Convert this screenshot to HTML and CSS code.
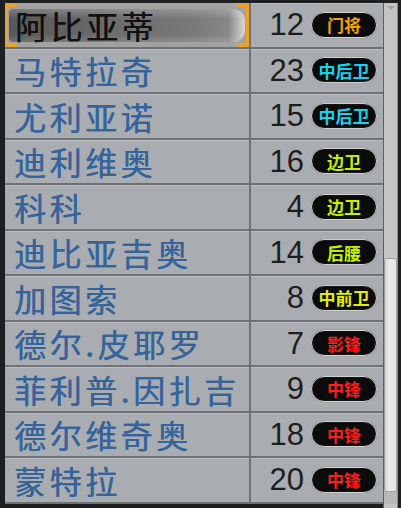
FILE: index.html
```html
<!DOCTYPE html>
<html lang="zh-CN">

<head>
    <meta charset="UTF-8">
    <meta name="viewport" content="width=device-width, initial-scale=1.0">
    <title>球员名单</title>
    <link rel="stylesheet" href="styles.css">
</head>

<body>
    <div class="panel">
        <div class="list">
            <div class="row selected">
                <div class="name"><span class="hl">阿比亚蒂</span></div>
                <div class="info"><span class="num">12</span><span class="pos gk">门将</span></div>
            </div>
            <div class="row">
                <div class="name">马特拉奇</div>
                <div class="info"><span class="num">23</span><span class="pos cb">中后卫</span></div>
            </div>
            <div class="row">
                <div class="name">尤利亚诺</div>
                <div class="info"><span class="num">15</span><span class="pos cb">中后卫</span></div>
            </div>
            <div class="row">
                <div class="name">迪利维奥</div>
                <div class="info"><span class="num">16</span><span class="pos wb">边卫</span></div>
            </div>
            <div class="row">
                <div class="name">科科</div>
                <div class="info"><span class="num">4</span><span class="pos wb">边卫</span></div>
            </div>
            <div class="row">
                <div class="name">迪比亚吉奥</div>
                <div class="info"><span class="num">14</span><span class="pos wb">后腰</span></div>
            </div>
            <div class="row">
                <div class="name">加图索</div>
                <div class="info"><span class="num">8</span><span class="pos cm">中前卫</span></div>
            </div>
            <div class="row">
                <div class="name">德尔.皮耶罗</div>
                <div class="info"><span class="num">7</span><span class="pos fw">影锋</span></div>
            </div>
            <div class="row">
                <div class="name">菲利普.因扎吉</div>
                <div class="info"><span class="num">9</span><span class="pos fw">中锋</span></div>
            </div>
            <div class="row">
                <div class="name">德尔维奇奥</div>
                <div class="info"><span class="num">18</span><span class="pos fw">中锋</span></div>
            </div>
            <div class="row">
                <div class="name">蒙特拉</div>
                <div class="info"><span class="num">20</span><span class="pos fw">中锋</span></div>
            </div>
        </div>
        <div class="scrollbar">
            <div class="arrow"></div>
            <div class="track"></div>
            <div class="thumb"></div>
            <div class="grip"></div>
        </div>
    </div>
</body>

</html>
```

FILE: styles.css
```css
*{
    box-sizing: border-box;
}
body{
    margin:0;
    background:#1e1f21;
}
.panel{
    width:401px;
    height:508px;
    padding:3px 3px 0 5px;
    display:flex;
    background:#1e1f21;
}
.list{
    width:379px;
    border-right:1px solid #5c6065;
}
.row{
    display:flex;
    height:45.5px;
    border-bottom:2px solid #6d7176;
    background:#a9adb1;
    box-shadow:inset 0 1px 0 #bcc0c4;
}
.name{
    width:246px;
    border-right:2px solid #6d7176;
    display:flex;
    align-items:center;
    padding-left:9px;
    font-family:"Noto Sans CJK SC", sans-serif;
    font-size:32px;
    line-height:1;
    letter-spacing:3.5px;
    color:#36649a;
    text-shadow:0.6px 0 0 #36649a;
    position:relative;
    white-space:nowrap;
}
.info{
    flex:1;
    display:flex;
    align-items:center;
    justify-content:flex-end;
    gap:7px;
    padding-right:6px;
}
.num{
    font-family:"Liberation Sans", sans-serif;
    font-size:31px;
    line-height:1;
    color:#1e1e1e;
}
.pos{
    width:66px;
    height:26px;
    border-radius:13px;
    background:#0b0b0b;
    border:1px solid #cfd1d3;
    box-shadow:0 0 1px #7a7a7a, inset 0 0 2px #333;
    display:flex;
    align-items:center;
    justify-content:center;
    font-family:"Noto Sans CJK SC", sans-serif;
    font-weight:bold;
    font-size:17px;
    line-height:1;
}
.gk{ color:#f4a400; }
.cb{ color:#12d4f4; }
.wb{ color:#c6ee00; }
.cm{ color:#e6ee00; }
.fw{ color:#ff1c1c; }

/* selected row */
.selected .name{
    padding-left:0;
    background:#a2a2a2;
    color:#111;
    text-shadow:0.6px 0 0 #111;
}
.selected .hl{
    flex:1;
    align-self:stretch;
    margin:6px 4px 5px 4px;
    padding-left:6px;
    display:flex;
    align-items:center;
    border-radius:4px 12px 12px 4px;
    background:
        linear-gradient(to bottom, rgba(255,255,255,.22), rgba(255,255,255,0) 30%, rgba(255,255,255,0) 75%, rgba(255,255,255,.14)),
        linear-gradient(90deg, #585858, #6a6a6a 40%, #7a7a7a 80%, #888 93%, #d8d8d8);
}
.selected .name::before,
.selected .name::after{
    content:"";
    position:absolute;
    top:0;
    bottom:0;
    width:9px;
    border:4px solid #eea224;
    border-left-width:3px;
    border-right-width:0;
}
.selected .name::before{
    left:0;
}
.selected .name::after{
    right:0;
    border-left-width:0;
    border-right-width:3px;
}

/* scrollbar */
.scrollbar{
    width:14px;
    display:flex;
    flex-direction:column;
    background:#c2c4c6;
    border-right:1px solid #8a8c8e;
}
.arrow{
    height:14px;
    display:flex;
    justify-content:center;
    padding-top:3px;
}
.arrow::before{
    content:"";
    border-left:4px solid transparent;
    border-right:4px solid transparent;
    border-top:4px solid #9fa1a3;
    height:0;
}
.track{
    flex:1;
}
.thumb{
    height:234px;
    background:linear-gradient(90deg, #d2d2d2, #ececec 40%, #e2e2e2);
    border:1px solid #9c9ea0;
    border-radius:2px;
}
.grip{
    height:12px;
    margin-bottom:4px;
    background:#b6b8ba;
}
```
